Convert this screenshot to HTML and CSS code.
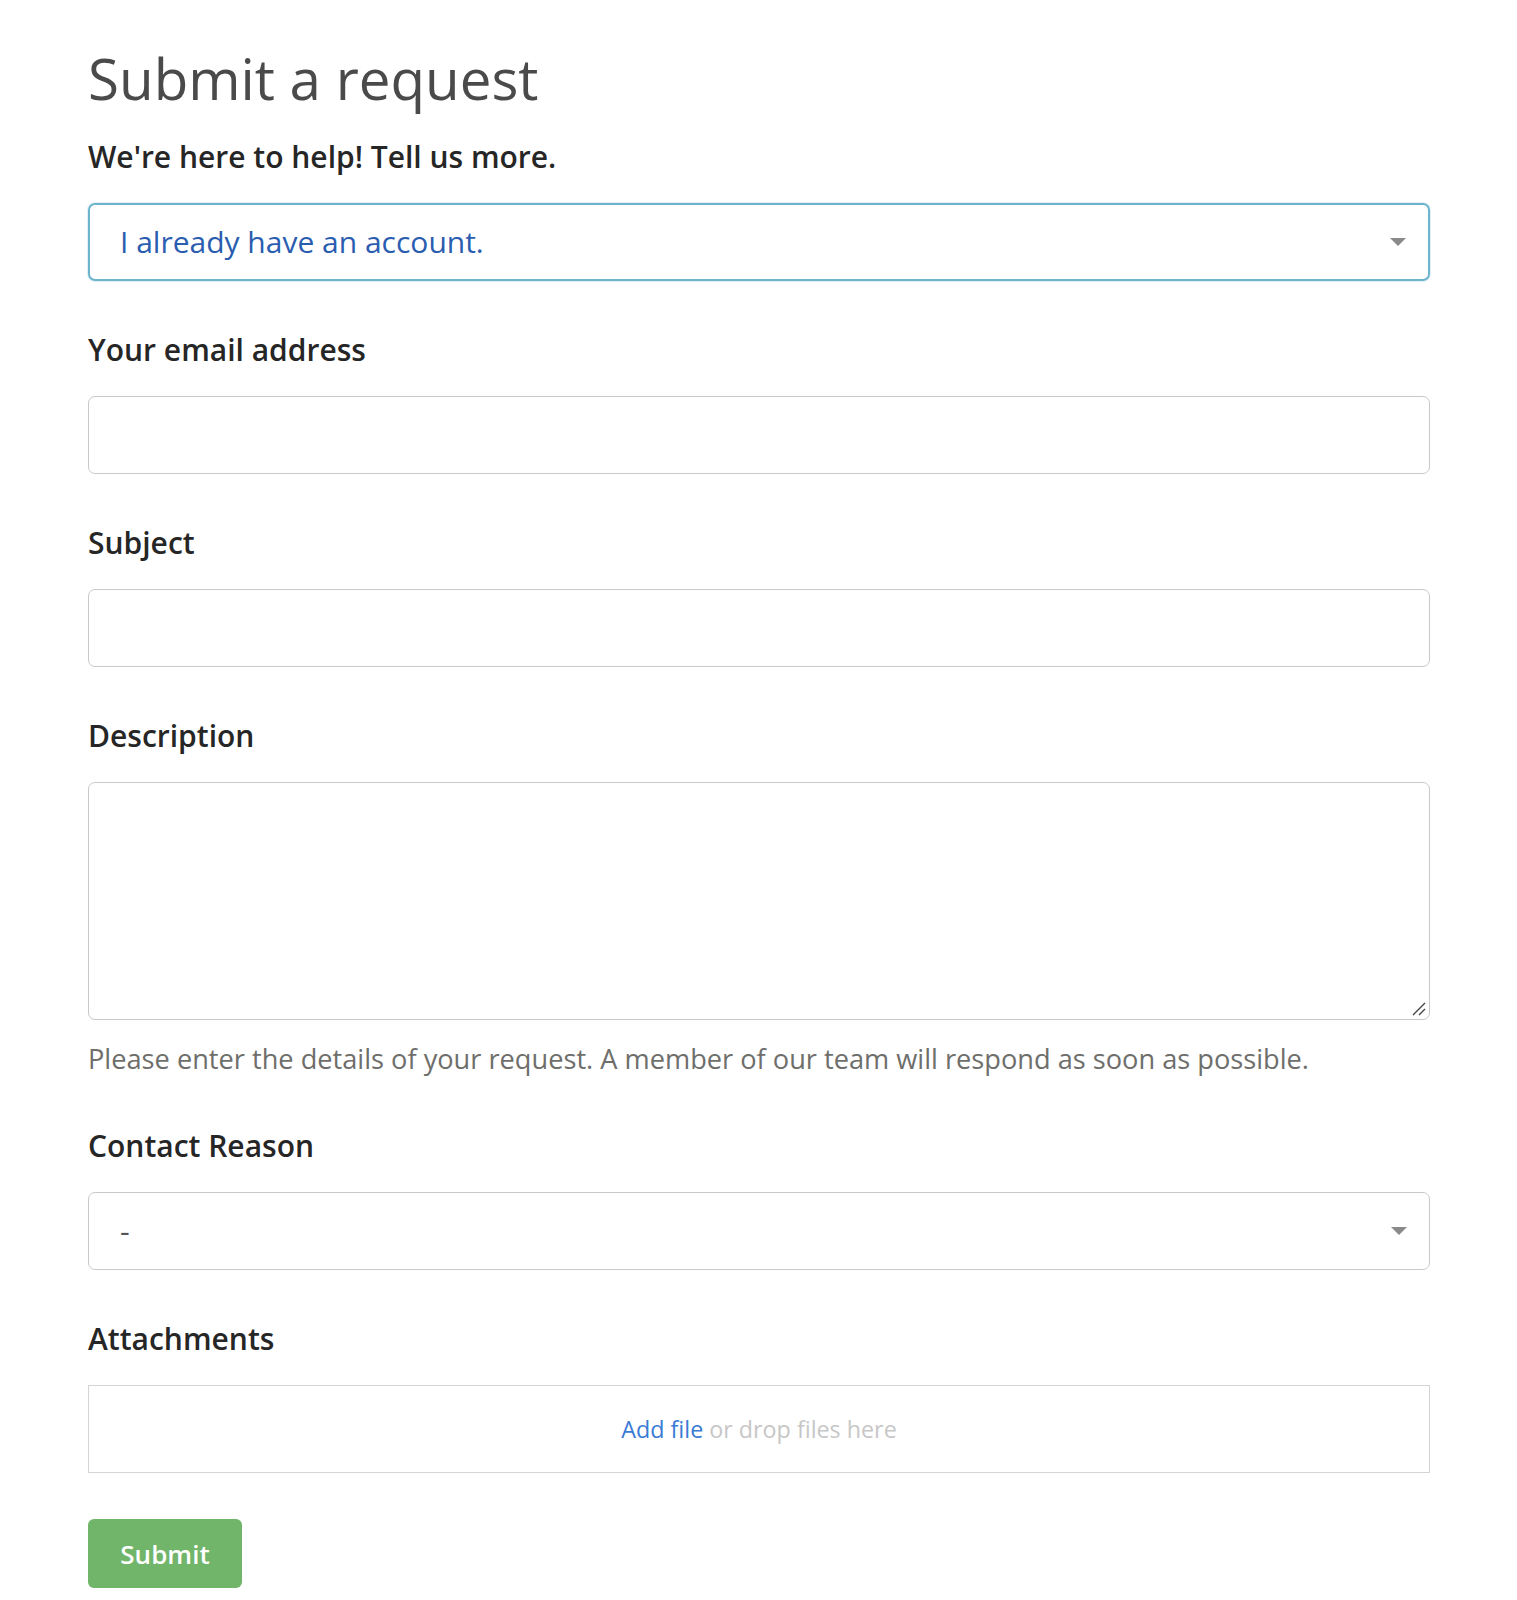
FILE: index.html
```html
<!DOCTYPE html>
<html lang="en">
<head>
<meta charset="utf-8">
<title>Submit a request</title>
<link rel="stylesheet" href="styles.css">
</head>
<body>
<main class="page">
  <h1 class="title">Submit a request</h1>
  <p class="intro">We're here to help! Tell us more.</p>
  <div class="select select-focus">
    <span class="select-value">I already have an account.</span>
    <span class="caret"></span>
  </div>

  <div class="field">
    <label class="label">Your email address</label>
    <div class="input"></div>
  </div>

  <div class="field">
    <label class="label">Subject</label>
    <div class="input"></div>
  </div>

  <div class="field">
    <label class="label">Description</label>
    <div class="textarea">
      <svg class="grip" width="16" height="16" viewBox="0 0 16 16"><path d="M3 15 L15 3 M9 15 L15 9" stroke="#444" stroke-width="1.4" fill="none"/></svg>
    </div>
    <p class="hint">Please enter the details of your request. A member of our team will respond as soon as possible.</p>
  </div>

  <div class="field">
    <label class="label">Contact Reason</label>
    <div class="select">
      <span class="select-value dash">-</span>
      <span class="caret"></span>
    </div>
  </div>

  <div class="field">
    <label class="label">Attachments</label>
    <div class="dropzone"><a class="add-file">Add file</a> <span class="drop">or drop files here</span></div>
  </div>

  <button class="submit">Submit</button>
</main>
</body>
</html>
```

FILE: styles.css
```css
* { box-sizing: border-box; }
html, body { margin: 0; padding: 0; background: #fff; }
body { font-family: "Open Sans", "Liberation Sans", sans-serif; }
.page { width: 1342px; margin-left: 88px; padding-top: 41px; }
.title { margin: 0; font-size: 56.5px; font-weight: 400; color: #4a4a4a; line-height: 76px; }
.intro { margin: 20px 0 26px; font-size: 30px; font-weight: 600; color: #262626; line-height: 40px; }
.select {
  height: 78px; border: 1px solid #c9c9c9; border-radius: 7px;
  display: flex; align-items: center; justify-content: space-between;
  padding: 0 22px 0 31px;
}
.select-focus { border: 2px solid #6cb4cc; box-shadow: 0 0 0 1px rgba(108,180,204,0.2); padding-left: 30px; }
.select-value { font-size: 30px; color: #2a5db0; line-height: 40px; }
.dash { color: #555; }
.caret { width: 0; height: 0; border-left: 8px solid transparent; border-right: 8px solid transparent; border-top: 8px solid #8a8a8a; }
.field { margin-top: 49px; }
.label { display: block; font-size: 30px; font-weight: 600; color: #262626; line-height: 40px; margin-bottom: 26px; }
.input { height: 78px; border: 1px solid #c9c9c9; border-radius: 7px; }
.textarea { position: relative; height: 238px; border: 1px solid #c9c9c9; border-radius: 7px; }
.grip { position: absolute; right: 3px; bottom: 3px; }
.hint { margin: 21px 0 0; font-size: 27.2px; color: #6e6e6b; line-height: 36px; }
.dropzone { height: 88px; border: 1px solid #d4d4d4; display: flex; align-items: center; justify-content: center; font-size: 23.3px; }
.add-file { color: #3a7bd5; }
.drop { color: #c7c7c7; margin-left: 6px; }
.submit {
  display: block; margin-top: 46px; height: 69px; width: 154px; border: 0; border-radius: 6px;
  background: #71b56a; color: #fff; font-family: inherit; font-size: 26px; font-weight: 600; padding: 0;
}
```
